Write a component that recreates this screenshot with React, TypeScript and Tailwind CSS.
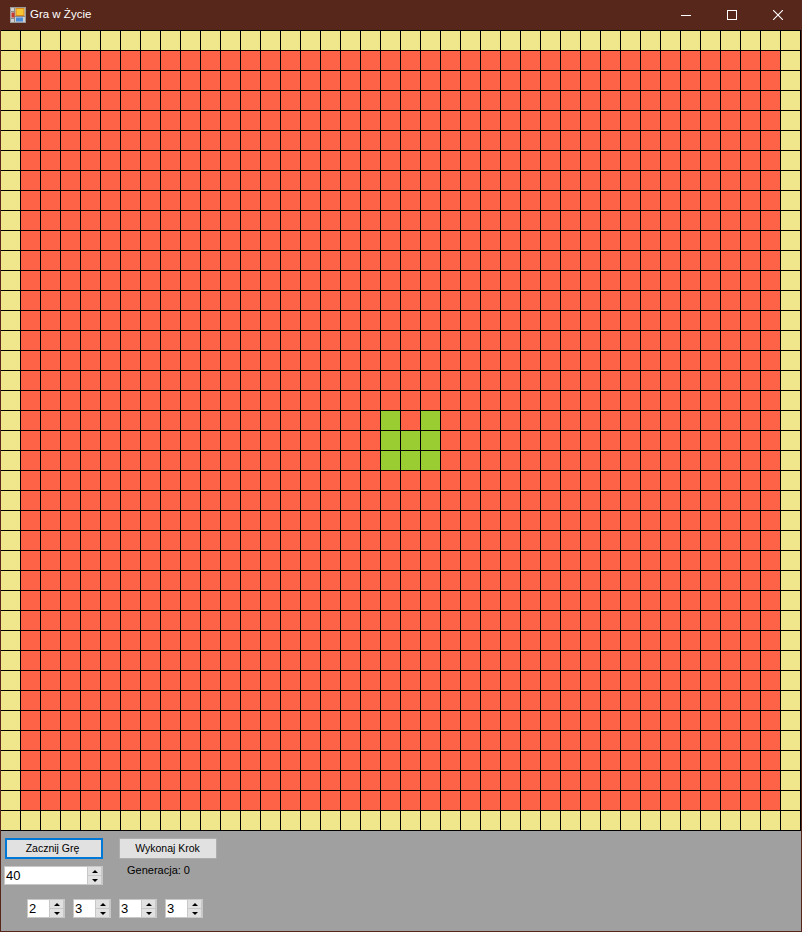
import React from 'react';

const GRID_SIZE = 40;
const ALIVE = ['19-19', '19-21', '20-19', '20-20', '20-21', '21-19', '21-20', '21-21'];

const cellColor = (row: number, col: number) => {
  if (ALIVE.includes(`${row}-${col}`)) return 'bg-[#9acd32]';
  if (row === 0 || col === 0 || row === GRID_SIZE - 1 || col === GRID_SIZE - 1) return 'bg-[#f0e68c]';
  return 'bg-[#ff6347]';
};

const Arrow: React.FC<{ down?: boolean }> = ({ down }) => (
  <div className="flex h-[8px] w-full items-center justify-center bg-[#e1e1e1]">
    <div
      className={`h-0 w-0 border-x-[3.5px] border-x-transparent ${
        down ? 'border-t-[3.5px] border-t-black' : 'border-b-[3.5px] border-b-black'
      }`}
    />
  </div>
);

const Spinner: React.FC<{ value: string; width: string }> = ({ value, width }) => (
  <div className={`flex h-[19px] ${width} border border-[#c8c8c8] bg-white`}>
    <span className="flex-1 pl-[1px] text-[13px] leading-[17px] text-black">{value}</span>
    <div className="flex w-[15px] flex-col justify-between bg-[#c8c8c8] px-[1px]">
      <Arrow />
      <Arrow down />
    </div>
  </div>
);

export default function App() {
  const cells = [];
  for (let row = 0; row < GRID_SIZE; row++) {
    for (let col = 0; col < GRID_SIZE; col++) {
      cells.push(<div key={`${row}-${col}`} className={cellColor(row, col)} />);
    }
  }

  return (
    <div className="flex h-[932px] w-[802px] flex-col bg-[#58271b] px-[1px] pb-[1px] font-['Liberation_Sans',sans-serif]">
      {/* Title bar */}
      <div className="flex h-[30px] items-center text-white">
        <svg width="16" height="16" viewBox="0 0 16 16" className="ml-[9px]">
          <rect x="0.5" y="0.5" width="15" height="15" fill="#cfcfcf" stroke="#9a9a9a" />
          <path d="M4.5 1V15M1 4.5H4.5M1 11.5H4.5M5 9.5H15" stroke="#8a8a8a" />
          <rect x="6" y="1.5" width="8" height="7" fill="#f7c531" stroke="#d9861c" />
          <rect x="1.5" y="5.5" width="3" height="5" fill="#c8372d" />
          <rect x="6" y="10.5" width="7" height="4" fill="#4a8ad8" />
        </svg>
        <span className="ml-[4px] text-[11.5px]">Gra w Życie</span>
        <div className="ml-auto flex h-full">
          <button className="flex w-[46px] items-center justify-center">
            <div className="h-[1px] w-[10px] bg-white" />
          </button>
          <button className="flex w-[46px] items-center justify-center">
            <div className="h-[10px] w-[10px] border border-white" />
          </button>
          <button className="flex w-[46px] items-center justify-center">
            <svg width="10" height="10" viewBox="0 0 10 10" stroke="white" strokeWidth="1.1">
              <path d="M0 0L10 10M10 0L0 10" />
            </svg>
          </button>
        </div>
      </div>

      {/* Board */}
      <div className="grid h-[801px] w-[800px] grid-cols-[repeat(40,19px)] grid-rows-[repeat(40,19px)] gap-[1px] border-y border-black bg-black">
        {cells}
      </div>

      {/* Controls */}
      <div className="flex flex-1 flex-col bg-[#a0a0a0] pt-[7px] pl-[3px] text-[11px]">
        <div className="flex">
          <div className="flex flex-col">
            <button className="ml-[1px] h-[21px] w-[98px] border-2 border-[#0078d7] bg-[#e1e1e1] pr-[3px] text-center text-[10.5px] leading-[17px] text-black">
              Zacznij Grę
            </button>
            <div className="mt-[7px]">
              <Spinner value="40" width="w-[99px]" />
            </div>
          </div>
          <div className="ml-[16px] flex flex-col">
            <button className="h-[21px] w-[98px] border border-[#adadad] bg-[#e1e1e1] pr-[1px] text-center text-[10.5px] text-black">
              Wykonaj Krok
            </button>
            <span className="mt-[3px] ml-[8px] leading-[17px] text-black">Generacja: 0</span>
          </div>
        </div>
        <div className="mt-[14px] ml-[23px] flex gap-[8px]">
          {['2', '3', '3', '3'].map((value, idx) => (
            <Spinner key={idx} value={value} width="w-[38px]" />
          ))}
        </div>
      </div>
    </div>
  );
}
